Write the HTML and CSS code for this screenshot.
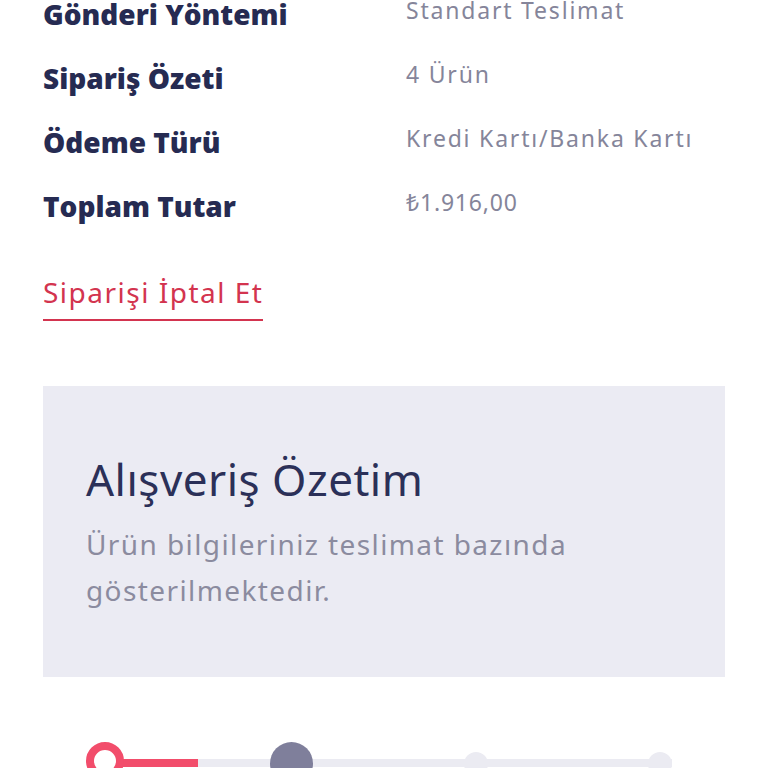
FILE: index.html
```html
<!DOCTYPE html>
<html lang="tr">
<head>
<meta charset="utf-8">
<title>Sipariş Detayı</title>
<link rel="stylesheet" href="styles.css">
</head>
<body>
<main class="page">
  <dl class="info">
    <div class="row"><dt>Gönderi Yöntemi</dt><dd>Standart Teslimat</dd></div>
    <div class="row"><dt>Sipariş Özeti</dt><dd>4 Ürün</dd></div>
    <div class="row"><dt>Ödeme Türü</dt><dd>Kredi Kartı/Banka Kartı</dd></div>
    <div class="row"><dt>Toplam Tutar</dt><dd class="amount">₺1.916,00</dd></div>
  </dl>
  <div class="cancel-wrap"><a class="cancel" href="#">Siparişi İptal Et</a></div>
  <section class="summary">
    <h2>Alışveriş Özetim</h2>
    <p>Ürün bilgileriniz teslimat bazında gösterilmektedir.</p>
  </section>
  <div class="stepper">
    <div class="track"><div class="fill"></div></div>
    <span class="step step-current"></span>
    <span class="step step-next"></span>
    <span class="step step-small s3"></span>
    <span class="step step-small s4"></span>
  </div>
</main>
</body>
</html>
```
FILE: styles.css
```css
* { box-sizing: border-box; }
html, body { margin: 0; padding: 0; background: #fff; }
body { font-family: "Noto Sans", "Open Sans", sans-serif; overflow: hidden; height: 768px; }
.page { padding: 0 43px; margin-top: -6px; }
.info { margin: 0; }
.row { display: grid; grid-template-columns: 363px 1fr; height: 64px; align-items: start; }
.row dt { font-family: "Open Sans", sans-serif; font-weight: 800; font-size: 28px; line-height: 40px; color: #262b52; margin: 0; }
.row dd { margin: 0; font-size: 23px; letter-spacing: 1.8px; line-height: 40px; color: #85859a; position: relative; top: -4px; }
.row dd.amount { letter-spacing: 0.8px; }
.cancel-wrap { display: flex; padding-top: 24px; }
.cancel { display: block; font-size: 28px; letter-spacing: 1.5px; line-height: 36px; color: #d3344f; text-decoration: none; border-bottom: 2px solid #d3344f; padding-bottom: 9px; }
.summary { margin-top: 65px; background: #ebebf3; height: 291px; padding: 67px 43px 0; }
.summary h2 { margin: 0; font-weight: 400; font-size: 44px; letter-spacing: 0.5px; line-height: 52px; color: #2b3058; }
.summary p { margin: 16px 0 0; font-size: 28px; letter-spacing: 1.4px; line-height: 46px; color: #8b8b9f; max-width: 560px; }
.stepper { position: relative; height: 90px; }
.track { position: absolute; left: 64px; right: 53px; top: 82px; height: 8px; background: #ebebf2; }
.fill { width: 91px; height: 100%; background: #f24d6b; }
.step { position: absolute; border-radius: 50%; }
.step-current { left: 43px; top: 65px; width: 38px; height: 38px; border: 8px solid #f24d6b; background: #fff; }
.step-next { left: 227px; top: 65px; width: 43px; height: 43px; background: #7f7f9b; }
.step-small { top: 75px; width: 24px; height: 24px; background: #ebebf2; }
.s3 { left: 421px; }
.s4 { left: 605px; }
```
